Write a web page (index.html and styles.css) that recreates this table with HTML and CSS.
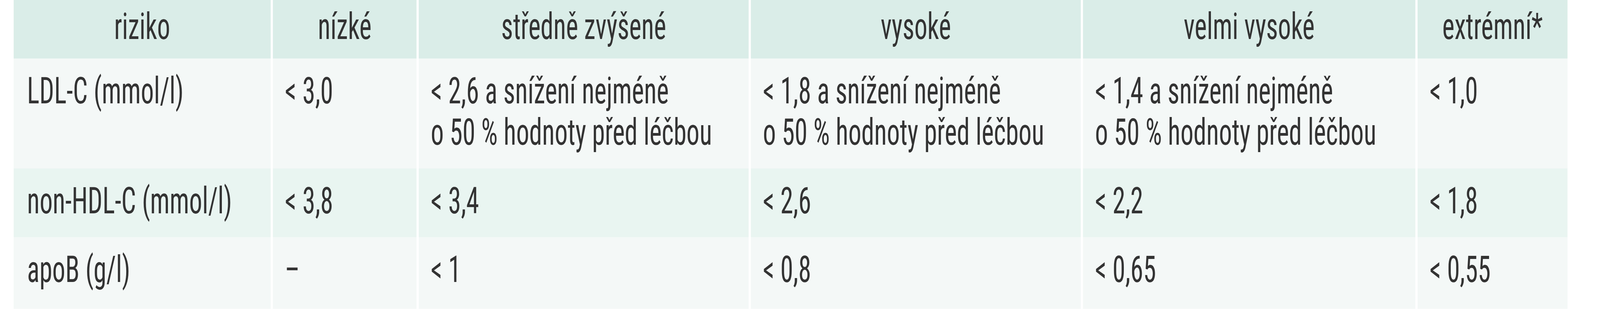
FILE: index.html
```html
<!DOCTYPE html>
<html lang="cs">
<head>
<meta charset="utf-8">
<title>Cílové hodnoty lipidů podle rizika</title>
<link rel="stylesheet" href="styles.css">
</head>
<body>
<div class="sheet">
  <table class="risk-table">
    <colgroup>
      <col class="col-risk">
      <col class="col-low">
      <col class="col-mid">
      <col class="col-high">
      <col class="col-vhigh">
      <col class="col-ext">
    </colgroup>
    <thead>
      <tr>
        <th>riziko</th>
        <th>nízké</th>
        <th>středně zvýšené</th>
        <th>vysoké</th>
        <th>velmi vysoké</th>
        <th>extrémní*</th>
      </tr>
    </thead>
    <tbody>
      <tr>
        <td class="label">LDL-C (mmol/l)</td>
        <td>&lt; 3,0</td>
        <td>&lt; 2,6 a snížení nejméně<br>o 50 % hodnoty před léčbou</td>
        <td>&lt; 1,8 a snížení nejméně<br>o 50 % hodnoty před léčbou</td>
        <td>&lt; 1,4 a snížení nejméně<br>o 50 % hodnoty před léčbou</td>
        <td>&lt; 1,0</td>
      </tr>
      <tr class="alt">
        <td class="label">non-HDL-C (mmol/l)</td>
        <td>&lt; 3,8</td>
        <td>&lt; 3,4</td>
        <td>&lt; 2,6</td>
        <td>&lt; 2,2</td>
        <td>&lt; 1,8</td>
      </tr>
      <tr class="last">
        <td class="label">apoB (g/l)</td>
        <td>–</td>
        <td>&lt; 1</td>
        <td>&lt; 0,8</td>
        <td>&lt; 0,65</td>
        <td>&lt; 0,55</td>
      </tr>
    </tbody>
  </table>
</div>
<script src="script.js"></script>
</body>
</html>
```
FILE: styles.css
```css
:root {
  --sx: 0.699215;
}

html, body {
  margin: 0;
  padding: 0;
  background: #ffffff;
  overflow: hidden;
}

body {
  font-family: "Roboto Condensed", "Liberation Sans Narrow", "Liberation Sans", sans-serif;
  font-size: 95px;
  line-height: 106px;
  color: #333333;
}

/* The table is laid out on a 5858px-wide sheet and fitted to the window width. */
.sheet {
  width: 5858px;
  height: 800px;
  transform-origin: 0 0;
  transform: scaleX(var(--sx));
}

.risk-table {
  border-collapse: separate;
  border-spacing: 8px 0;
  margin-left: 42px;
  table-layout: fixed;
  width: 5705px;
}

.col-risk { width: 941px; }
.col-low { width: 526px; }
.col-mid { width: 1208px; }
.col-high { width: 1208px; }
.col-vhigh { width: 1217px; }
.col-ext { width: 549px; }

.risk-table th,
.risk-table td {
  box-sizing: border-box;
  white-space: nowrap;
}

.risk-table th {
  background: #daede8;
  font-weight: normal;
  text-align: center;
  padding: 15px 20px 29px;
}

.risk-table td {
  background: #f4f8f7;
  text-align: left;
  vertical-align: top;
  padding: 30px 20px 40px 44px;
}

.risk-table td.label {
  padding-left: 49px;
}

.risk-table tr.alt td {
  background: #e9f5f1;
}

.risk-table tr.last td {
  padding-bottom: 48px;
}
```
FILE: script.js
```js
// Fit the 5858px-wide sheet to the actual window width.
document.documentElement.style.setProperty('--sx', String(window.innerWidth / 5858));
```
